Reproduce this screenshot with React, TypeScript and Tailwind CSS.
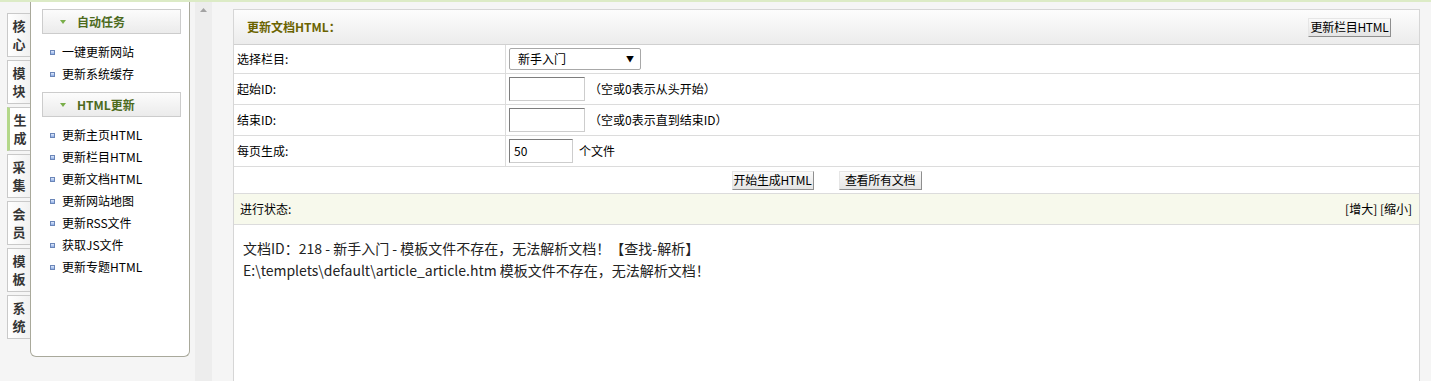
import clsx from 'clsx'

const tabs = ['核心', '模块', '生成', '采集', '会员', '模板', '系统']

const menus = [
  { title: '自动任务', items: ['一键更新网站', '更新系统缓存'] },
  {
    title: 'HTML更新',
    items: ['更新主页HTML', '更新栏目HTML', '更新文档HTML', '更新网站地图', '更新RSS文件', '获取JS文件', '更新专题HTML'],
  },
]

function Tab({ label, active }: { label: string; active?: boolean }) {
  return (
    <div
      className={clsx(
        'flex h-[44px] w-[23px] flex-col items-center justify-center border border-r-0 border-[#c9c9c9] text-[13px] font-bold leading-[18px] text-[#353535]',
        active ? 'border-l-[3px] border-l-[#b4d88a] bg-white' : 'bg-gradient-to-r from-white to-[#f1f1f1]'
      )}
    >
      {label.split('').map(c => (
        <span key={c}>{c}</span>
      ))}
    </div>
  )
}

function Btn({ children, w }: { children: React.ReactNode; w: string }) {
  return (
    <div
      className={clsx(
        'flex h-[19px] items-center justify-center whitespace-nowrap border border-[#e6e6e6] border-r-[#8e8e8e] border-b-[#8e8e8e] bg-gradient-to-b from-[#fafafa] to-[#e4e4e4] text-[12px] tracking-[-0.3px] text-black',
        w
      )}
    >
      {children}
    </div>
  )
}

function Row({ label, h, children }: { label: string; h: string; children: React.ReactNode }) {
  return (
    <div className={clsx('flex border-b border-[#dcdcdc]', h)}>
      <div className="flex w-[272px] items-center border-r border-[#dcdcdc] pl-[3px]">{label}</div>
      <div className="flex items-center pl-[3px]">{children}</div>
    </div>
  )
}

function Input({ w, value }: { w: string; value?: string }) {
  return (
    <div
      className={clsx(
        'flex h-[24px] items-center border border-[#cdcdcd] border-t-[#7d7d7d] border-l-[#7d7d7d] bg-white pl-[4px] text-[12px]',
        w
      )}
    >
      {value}
    </div>
  )
}

export default function App() {
  return (
    <div className="flex h-[381px] w-[1431px] overflow-hidden border-t-2 border-[#dcebc6] bg-[#f5f5f5] font-['SimSun','Noto_Sans_CJK_SC',sans-serif] text-[12px] text-black">
      {/* side tabs */}
      <div className="flex w-[30px] shrink-0 flex-col gap-[3px] pl-[7px] pt-[11px]">
        {tabs.map(t => (
          <Tab key={t} label={t} active={t === '生成'} />
        ))}
      </div>

      {/* menu panel */}
      <div className="h-[355px] w-[160px] shrink-0 rounded-b-[6px] border border-t-0 border-[#a9a99b] bg-white pt-[7px]">
        {menus.map(m => (
          <div key={m.title}>
            <div className="ml-[11px] flex h-[25px] w-[139px] items-center border border-[#cccccc] bg-gradient-to-b from-[#fcfcfc] to-[#ebebeb] pl-[17px] text-[12px] font-bold text-[#4c6a1c]">
              <svg width="6" height="4" viewBox="0 0 6 4" className="mr-[11px]">
                <path d="M0 0h6L3 4z" fill="#79ae49" />
              </svg>
              {m.title}
            </div>
            <ul className="py-[7px]">
              {m.items.map(it => (
                <li key={it} className="flex h-[22px] items-center pl-[19px]">
                  <span className="mr-[7px] h-[5px] w-[5px] border border-[#6b86b8] bg-gradient-to-b from-[#dfe9fb] to-[#8eaee6]" />
                  {it}
                </li>
              ))}
            </ul>
          </div>
        ))}
      </div>

      {/* scroll strip */}
      <div className="ml-[5px] flex h-full w-[17px] shrink-0 justify-center bg-[#ededed] pt-[6px]">
        <svg width="7" height="4" viewBox="0 0 7 4">
          <path d="M3.5 0L7 4H0z" fill="#a3a3a3" />
        </svg>
      </div>

      {/* main panel */}
      <div className="ml-[21px] mt-[7px] h-[400px] w-[1187px] shrink-0 border border-[#d6d6d6] bg-white">
        <div className="flex h-[35px] items-center justify-between border-b border-[#d0d0d0] bg-gradient-to-b from-[#fdfdfd] to-[#ececec] pl-[13px] pr-[28px]">
          <span className="font-bold text-[#6b6300]">更新文档HTML：</span>
          <Btn w="w-[83px]">更新栏目HTML</Btn>
        </div>

        <Row label="选择栏目:" h="h-[29px]">
          <div className="flex h-[22px] w-[132px] items-center justify-between rounded-[2px] border border-[#a8a8a8] bg-white pl-[8px] pr-[6px]">
            <span>新手入门</span>
            <span className="text-[8px]">▼</span>
          </div>
        </Row>
        <Row label="起始ID:" h="h-[31px]">
          <Input w="w-[76px]" />
          <span className="ml-[4px]">（空或0表示从头开始）</span>
        </Row>
        <Row label="结束ID:" h="h-[31px]">
          <Input w="w-[76px]" />
          <span className="ml-[4px]">（空或0表示直到结束ID）</span>
        </Row>
        <Row label="每页生成:" h="h-[31px]">
          <Input w="w-[64px]" value="50" />
          <span className="ml-[6px]">个文件</span>
        </Row>

        <div className="flex h-[27px] items-center justify-center gap-[25px] border-b border-[#dcdcdc]">
          <Btn w="w-[82px]">开始生成HTML</Btn>
          <Btn w="w-[83px]">查看所有文档</Btn>
        </div>

        <div className="flex h-[31px] items-center justify-between border-b border-[#dcdcdc] bg-[#f7f9ec] pl-[6px] pr-[7px]">
          <span>进行状态:</span>
          <span>[增大] [缩小]</span>
        </div>

        <div className="px-[9px] pt-[12px] font-['Noto_Sans_CJK_SC',sans-serif] text-[14px] leading-[22px] text-[#222]">
          <div>文档ID：218 - 新手入门 - 模板文件不存在，无法解析文档！【查找-解析】</div>
          <div>E:\templets\default\article_article.htm 模板文件不存在，无法解析文档！</div>
        </div>
      </div>
    </div>
  )
}
